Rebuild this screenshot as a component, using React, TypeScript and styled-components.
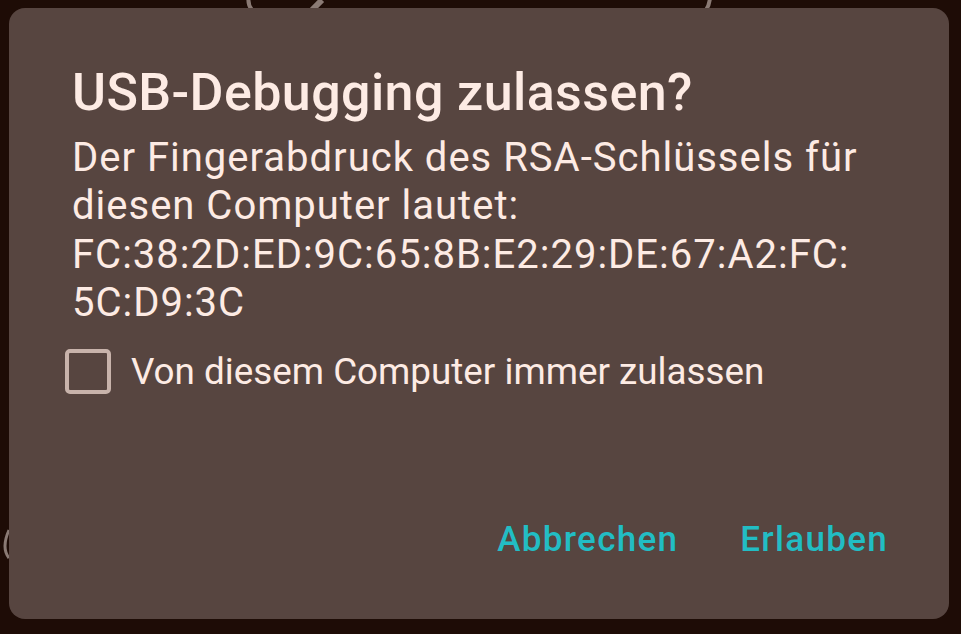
import styled, { createGlobalStyle } from "styled-components";

const GlobalStyle = createGlobalStyle`
  html, body {
    margin: 0;
    padding: 0;
    background-color: #1e0c06;
    overflow: hidden;
  }
`;

export default function App() {
  return (
    <>
      <GlobalStyle />
      <Screen>
        <Backdrop width="961" height="634" viewBox="0 0 961 634">
          <path d="M249 -4 Q247 4 252 10" stroke="#8a7a74" strokeWidth="4" fill="none" />
          <path d="M710 -4 Q710 4 706 10" stroke="#8a7a74" strokeWidth="4" fill="none" />
          <path d="M322 0 L312 10" stroke="#8a7a74" strokeWidth="6" fill="none" />
          <path d="M9 530 Q1 548 9 558" stroke="#8a7a74" strokeWidth="3" fill="none" />
        </Backdrop>
        <Dialog>
          <Title>USB-Debugging zulassen?</Title>
          <Message>
            Der Fingerabdruck des RSA-Schlüssels für diesen Computer lautet:
            <br />
            FC:38:2D:ED:9C:65:8B:E2:29:DE:67:A2:FC:
            <br />
            5C:D9:3C
          </Message>
          <CheckRow>
            <Checkbox />
            <CheckLabel>Von diesem Computer immer zulassen</CheckLabel>
          </CheckRow>
          <Actions>
            <ActionButton>Abbrechen</ActionButton>
            <ActionButton>Erlauben</ActionButton>
          </Actions>
        </Dialog>
      </Screen>
    </>
  );
}

const Screen = styled.div`
  position: relative;
  width: 961px;
  height: 634px;
  padding: 8px 12px 15px 9px;
  box-sizing: border-box;
  font-family: Roboto, "Noto Sans", sans-serif;
`;

const Backdrop = styled.svg`
  position: absolute;
  top: 0;
  left: 0;
`;

const Dialog = styled.div`
  position: relative;
  display: flex;
  flex-direction: column;
  height: 100%;
  box-sizing: border-box;
  padding: 54px 63px 55px 63px;
  background-color: #574540;
  border-radius: 16px;
`;

const Title = styled.h1`
  margin: 0;
  font-size: 52px;
  font-weight: 500;
  line-height: 61px;
  letter-spacing: 0.4px;
  color: #fdebe4;
`;

const Message = styled.p`
  margin: 11px 0 0;
  width: 810px;
  font-size: 40px;
  line-height: 48.4px;
  letter-spacing: 1px;
  color: #fdebe4;
`;

const CheckRow = styled.label`
  display: flex;
  align-items: center;
  gap: 20px;
  margin: 21px 0 0 -7px;
`;

const Checkbox = styled.span`
  width: 38px;
  height: 37px;
  border: 4px solid #c8b3ab;
  border-radius: 5px;
  flex-shrink: 0;
`;

const CheckLabel = styled.span`
  font-size: 36.8px;
  line-height: 44px;
  color: #fdebe4;
  transform: translateY(1px);
`;

const Actions = styled.div`
  display: flex;
  justify-content: flex-end;
  gap: 62px;
  margin-top: auto;
  margin-right: -2px;
`;

const ActionButton = styled.button`
  padding: 0;
  border: none;
  background: none;
  font-family: Roboto, "Noto Sans", sans-serif;
  font-size: 35px;
  font-weight: 500;
  line-height: 48px;
  letter-spacing: 1.3px;
  color: #22bdc4;
  cursor: pointer;
`;
